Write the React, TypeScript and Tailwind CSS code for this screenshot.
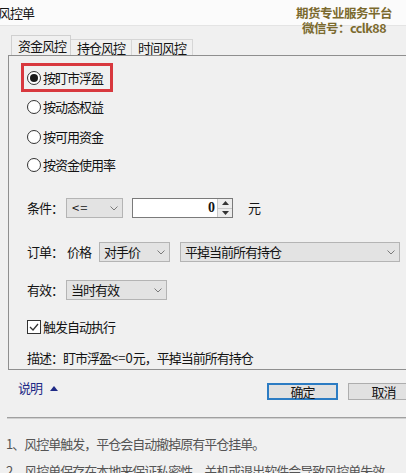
import React from "react";

function Chevron() {
  return (
    <svg width="8" height="5" viewBox="0 0 8 5">
      <path d="M0.5 0.5 L4 4 L7.5 0.5" fill="none" stroke="#7a7a7a" strokeWidth="1" />
    </svg>
  );
}

function Radio({ checked, label }: { checked?: boolean; label: string }) {
  return (
    <div className="flex items-center">
      <div className="flex h-[14px] w-[14px] items-center justify-center rounded-full border border-[#333] bg-white">
        {checked && <div className="h-[8px] w-[8px] rounded-full bg-[#1a1a1a]" />}
      </div>
      <span className="ml-[2px]">{label}</span>
    </div>
  );
}

export default function App() {
  return (
    <div className="relative h-[473px] w-[406px] overflow-hidden bg-[#f0f0f0] font-['Noto_Sans_CJK_SC','Noto_Sans',sans-serif] text-[13px] leading-[16px] tracking-[-1px] text-[#141414]">
      {/* title bar */}
      <div className="flex h-[26px] items-center border-b border-[#e4e4e4] bg-[#fbfbfb]">
        <span className="ml-[-2px]">风控单</span>
      </div>
      {/* watermark */}
      <div className="absolute right-[14px] top-[5px] flex flex-col items-center text-[12.5px] font-bold leading-[15px] tracking-[-0.5px] text-[#7b6a2e]">
        <span>期货专业服务平台</span>
        <span>微信号：cclk88</span>
      </div>

      {/* tabs */}
      <div className="mt-[9px] flex h-[20px] items-end pl-[11px]">
        <div className="flex h-[20px] w-[60px] items-center border-l border-r border-t border-[#d0d0d0] bg-[#f0f0f0] pl-[6px]">
          资金风控
        </div>
        <div className="flex h-[16px] w-[61px] items-center border-r border-t border-[#d6d6d6] pl-[6px]">
          持仓风控
        </div>
        <div className="flex h-[16px] w-[61px] items-center border-r border-t border-[#d6d6d6] pl-[6px]">
          时间风控
        </div>
      </div>

      {/* panel */}
      <div className="ml-[8px] flex h-[315px] flex-col border-b border-l border-t border-[#8f8f8f] pl-[12px]">
        <div className="mt-[7px] flex h-[29px] w-[92px] items-center border-[3px] border-[#d8383e] pl-[3px]">
          <Radio checked label="按盯市浮盈" />
        </div>
        <div className="flex h-[30px] items-center pl-[6px]">
          <Radio label="按动态权益" />
        </div>
        <div className="flex h-[30px] items-center pl-[6px]">
          <Radio label="按可用资金" />
        </div>
        <div className="flex h-[26px] items-center pl-[6px]">
          <Radio label="按资金使用率" />
        </div>

        {/* condition */}
        <div className="mt-[20px] flex h-[20px] items-center pl-[6px]">
          <span className="w-[39px]">条件：</span>
          <div className="flex h-[20px] w-[57px] items-center justify-between border border-[#b4b4b4] bg-[#e3e3e3] pl-[5px] pr-[4px]">
            <span className="tracking-[1px]">&lt;=</span>
            <Chevron />
          </div>
          <div className="ml-[9px] flex h-[20px] w-[101px] border border-[#7a7a7a] bg-white">
            <div className="flex flex-1 items-center justify-end pr-[2px] font-['Liberation_Serif',serif] text-[14px] font-bold tracking-normal">
              0
            </div>
            <div className="flex w-[15px] flex-col border-l border-[#c8c8c8] bg-[#ececec]">
              <div className="flex flex-1 items-center justify-center border-b border-[#c8c8c8]">
                <svg width="7" height="4" viewBox="0 0 7 4">
                  <path d="M0 4 L3.5 0 L7 4 Z" fill="#333" />
                </svg>
              </div>
              <div className="flex flex-1 items-center justify-center">
                <svg width="7" height="4" viewBox="0 0 7 4">
                  <path d="M0 0 L3.5 4 L7 0 Z" fill="#333" />
                </svg>
              </div>
            </div>
          </div>
          <span className="ml-[15px]">元</span>
        </div>

        {/* order */}
        <div className="mt-[24px] flex h-[20px] items-center pl-[6px]">
          <span className="w-[40px]">订单：</span>
          <span className="w-[32px]">价格</span>
          <div className="flex h-[20px] w-[71px] items-center justify-between border border-[#b4b4b4] bg-[#e3e3e3] pl-[4px] pr-[4px]">
            <span>对手价</span>
            <Chevron />
          </div>
          <div className="ml-[10px] flex h-[20px] w-[220px] items-center justify-between border border-[#b4b4b4] bg-[#e3e3e3] pl-[4px] pr-[4px]">
            <span>平掉当前所有持仓</span>
            <Chevron />
          </div>
        </div>

        {/* valid */}
        <div className="mt-[18px] flex h-[20px] items-center pl-[6px]">
          <span className="w-[39px]">有效：</span>
          <div className="flex h-[20px] w-[101px] items-center justify-between border border-[#b4b4b4] bg-[#e3e3e3] pl-[4px] pr-[4px]">
            <span>当时有效</span>
            <Chevron />
          </div>
        </div>

        {/* checkbox */}
        <div className="mt-[17px] flex h-[20px] items-center pl-[6px]">
          <div className="flex h-[14px] w-[14px] items-center justify-center border border-[#333] bg-white">
            <svg width="10" height="8" viewBox="0 0 10 8">
              <path d="M1 4 L4 7 L9 1" fill="none" stroke="#333" strokeWidth="1.3" />
            </svg>
          </div>
          <span className="ml-[2px]">触发自动执行</span>
        </div>

        {/* describe */}
        <div className="mt-[12px] flex h-[18px] items-center pl-[6px]">
          <span>
            描述：盯市浮盈<span className="tracking-normal">&lt;=0</span>元，平掉当前所有持仓
          </span>
        </div>
      </div>

      {/* buttons row */}
      <div className="flex h-[47px] items-start">
        <div className="ml-[18px] mt-[10px] flex items-center text-[#1f2a86]">
          <span>说明</span>
          <svg className="ml-[8px]" width="8" height="5" viewBox="0 0 8 5">
            <path d="M0 5 L4 0 L8 5 Z" fill="#1f2a86" />
          </svg>
        </div>
        <div className="ml-auto mr-[-13px] mt-[13px] flex gap-[10px]">
          <div className="flex h-[17px] w-[71px] items-center justify-center border-2 border-[#2c7cc3] bg-[#e1e1e1]">
            确定
          </div>
          <div className="flex h-[17px] w-[71px] items-center justify-center border border-[#adadad] bg-[#e1e1e1]">
            取消
          </div>
        </div>
      </div>

      {/* separator */}
      <div className="ml-[7px] h-[2px] border-b border-t border-b-[#d0d0d0] border-t-[#a0a0a0]" />

      {/* notes */}
      <div className="flex flex-col pl-[6px] text-[#555]">
        <div className="mt-[16px] flex h-[18px] items-center">1、风控单触发，平仓会自动撤掉原有平仓挂单。</div>
        <div className="mt-[9px] flex h-[18px] items-center whitespace-nowrap">
          2、风控单保存在本地来保证私密性，关机或退出软件会导致风控单失效。
        </div>
      </div>
    </div>
  );
}
